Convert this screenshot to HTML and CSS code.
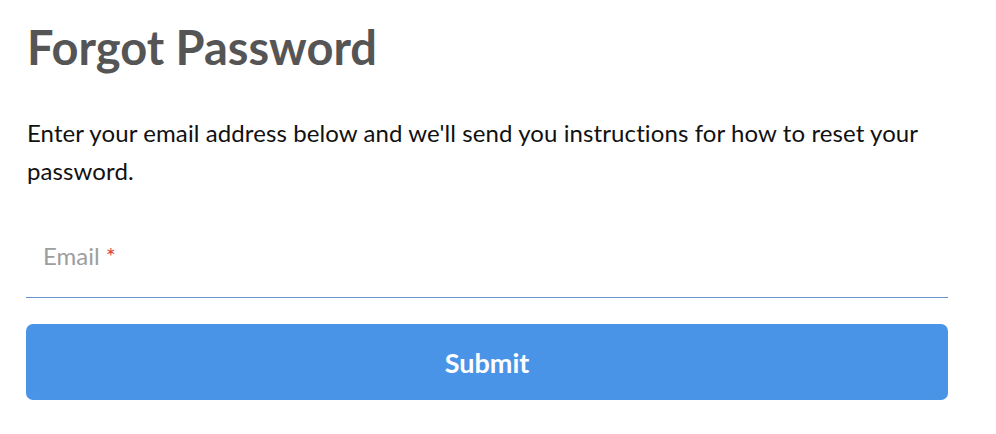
FILE: index.html
```html
<!DOCTYPE html>
<html lang="en">
<head>
    <meta charset="UTF-8">
    <meta name="viewport" content="width=device-width, initial-scale=1.0">
    <title>Forgot Password</title>
    <link rel="stylesheet" href="styles.css">
</head>
<body>

    <!-- FORGOT PASSWORD FORM -->
    <div class="forgot-container">
        <h1 class="title">Forgot Password</h1>
        <p class="intro">Enter your email address below and we'll send you instructions for how to reset your password.</p>

        <form>
            <div class="input-group">
                <label for="email" class="field-label">Email <span class="required">*</span></label>
                <input type="email" id="email" name="email" required />
            </div>

            <button type="submit" class="btn">Submit</button>
        </form>
    </div>

</body>
</html>
```

FILE: styles.css
```css
body {
    font-family: Lato, "Open Sans", sans-serif;
    background-color: #ffffff;
    margin: 0;
}

.forgot-container {
    width: 922px;
    padding: 20px 0 0 26px;
}

.title {
    font-size: 47px;
    font-weight: bold;
    color: #555555;
    line-height: 55px;
    margin: 0 0 0 1px;
}

.intro {
    font-size: 24px;
    letter-spacing: 0.1px;
    line-height: 38px;
    color: #111111;
    margin: 39px 0 0 1px;
}

.input-group {
    position: relative;
    margin-top: 35px;
    border-bottom: 1px solid #6b93d0;
    height: 72px;
}

.field-label {
    position: absolute;
    left: 17px;
    top: 16px;
    font-size: 24px;
    color: #9e9e9e;
}

.required {
    color: #e0483e;
}

input {
    width: 100%;
    height: 100%;
    border: none;
    outline: none;
    background: transparent;
    box-sizing: border-box;
    padding: 0 17px;
    font-size: 24px;
}

.btn {
    display: block;
    width: 100%;
    height: 76px;
    margin-top: 26px;
    background-color: #4a94e8;
    color: white;
    border: none;
    border-radius: 7px;
    cursor: pointer;
    font-family: Lato, "Open Sans", sans-serif;
    font-weight: bold;
    font-size: 27px;
}
```
